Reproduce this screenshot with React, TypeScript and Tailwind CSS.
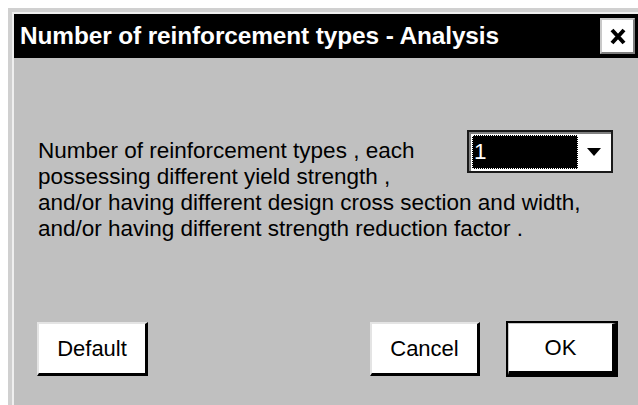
export default function App() {
  return (
    <div className="w-[638px] h-[405px] overflow-hidden bg-white pl-2 pt-2 font-['Liberation_Sans',Arial,sans-serif]">
      <div className="h-full bg-[#d0d0d0] pl-1 pt-1">
        <div className="h-full flex flex-col border-l-2 border-t-2 border-[#efefef]">
          {/* title bar */}
          <div className="h-[44px] shrink-0 bg-black flex items-center pl-[6px] pr-[3px]">
            <span className="text-white font-bold text-[24.4px] leading-none tracking-[-0.1px] whitespace-nowrap">
              Number of reinforcement types - Analysis
            </span>
            <div className="ml-auto w-[35px] h-[36px] bg-white border-2 border-t-[#c8c8c8] border-l-[#c8c8c8] border-r-[#808080] border-b-[#808080] flex items-center justify-center">
              <svg width="18" height="17" viewBox="0 0 18 17">
                <path d="M3 2 L15 15 M15 2 L3 15" stroke="black" strokeWidth="4" />
              </svg>
            </div>
          </div>

          {/* body */}
          <div className="flex-1 bg-[#c0c0c0] pl-[24px] pr-[20px] pt-[80px] text-black text-[22.5px] leading-[26px]">
            <div className="flex items-start justify-between">
              <span className="whitespace-nowrap">Number of reinforcement types , each</span>
              <div className="-mt-[8px] -mb-[9px] mr-[5px] w-[146px] h-[43px] border-2 border-[#1a1a1a] bg-white">
                <div className="h-full flex border-l-2 border-t-2 border-[#808080] p-[1px] pb-[2px] pr-[2px]">
                  <div className="flex-1 bg-black border border-dotted border-white text-white pl-[1px] leading-[32px]">
                    1
                  </div>
                  <div className="w-[31px] bg-white flex items-center justify-center">
                    <svg width="14" height="8" viewBox="0 0 14 8">
                      <path d="M0 0 H14 L7 8 Z" fill="black" />
                    </svg>
                  </div>
                </div>
              </div>
            </div>
            <div className="whitespace-nowrap">possessing different yield strength ,</div>
            <div className="whitespace-nowrap">and/or having different design cross section and width,</div>
            <div className="whitespace-nowrap">and/or having different strength reduction factor .</div>

            <div className="mt-[80px] flex items-start">
              <button className="ml-[-1px] w-[111px] h-[54px] bg-white border-t-2 border-l-2 border-t-[#e4e4e4] border-l-[#e4e4e4] border-r-[3px] border-b-[3px] border-r-black border-b-black text-[22px] leading-none">
                Default
              </button>
              <button className="ml-auto w-[110px] h-[54px] bg-white border-t-2 border-l-2 border-t-[#e4e4e4] border-l-[#e4e4e4] border-r-[3px] border-b-[3px] border-r-black border-b-black text-[22px] leading-none">
                Cancel
              </button>
              <div className="-mt-[1px] ml-[26px] w-[112px] h-[56px] border-2 border-black">
                <button className="w-full h-full bg-white border-t border-l border-[#c8c8c8] border-r-[4px] border-b-[4px] border-r-black border-b-black text-[22px] leading-none">
                  OK
                </button>
              </div>
            </div>
          </div>
        </div>
      </div>
    </div>
  );
}
